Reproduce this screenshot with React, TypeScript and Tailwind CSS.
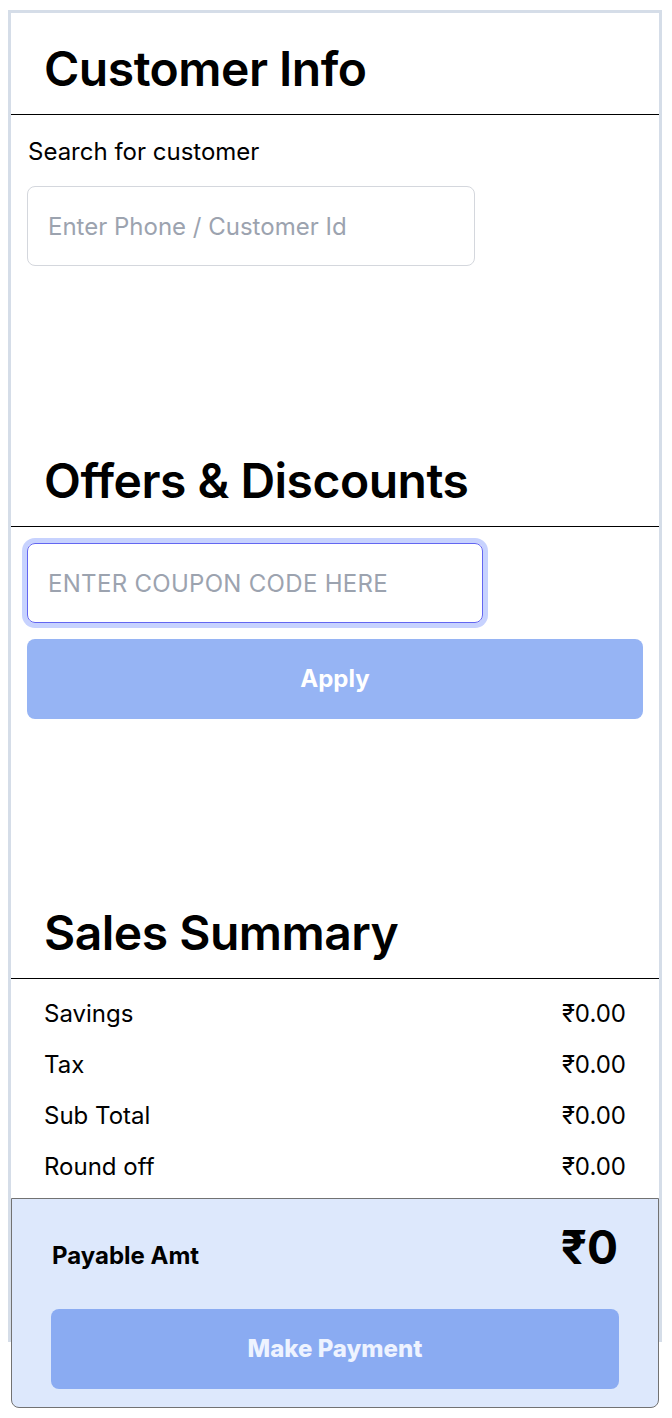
import React from 'react';

const SectionTitle: React.FC<{ title: string }> = ({ title }) => (
    <h2 className="px-[33px] pt-[32px] pb-[21px] text-[48px] leading-[48px] font-semibold tracking-[-0.5px] text-black border-b border-black">
        {title}
    </h2>
);

const SummaryRow: React.FC<{ label: string; value: string }> = ({ label, value }) => (
    <div className="flex justify-between items-center text-[24px] leading-[32px] text-black">
        <span>{label}</span>
        <span>{value}</span>
    </div>
);

const App: React.FC = () => {
    const rows = [
        { label: 'Savings', value: '₹0.00' },
        { label: 'Tax', value: '₹0.00' },
        { label: 'Sub Total', value: '₹0.00' },
        { label: 'Round off', value: '₹0.00' },
    ];

    return (
        <div className="min-h-screen bg-white pt-[10px] pl-[8px] font-['Inter','Liberation_Sans',sans-serif]">
            <div className="w-[654px] h-[1332px] border-[3px] border-[#d5dde8] flex flex-col">
                {/* customer */}
                <section className="h-[412px] shrink-0">
                    <SectionTitle title="Customer Info" />
                    <div className="px-4 pt-[21px]">
                        <p className="text-[24px] leading-[32px] text-black pl-[1px]">Search for customer</p>
                        <input
                            type="text"
                            placeholder="Enter Phone / Customer Id"
                            className="mt-[18px] w-[448px] h-[80px] rounded-lg border border-[#d4d7dd] px-5 text-[24px] text-black placeholder:text-[#9ca3af] outline-none"
                        />
                    </div>
                </section>

                {/* offers */}
                <section className="h-[452px] shrink-0">
                    <SectionTitle title="Offers & Discounts" />
                    <div className="px-4 pt-[16px] flex flex-col gap-4">
                        <input
                            type="text"
                            autoFocus
                            placeholder="ENTER COUPON CODE HERE"
                            className="w-[456px] h-[80px] rounded-lg border border-[#6366f1] ring-[5px] ring-[#c7d2fe] px-5 text-[24px] tracking-[0.3px] text-black placeholder:text-[#9ca3af] outline-none caret-[#374151]"
                        />
                        <button className="w-full h-[80px] rounded-lg bg-[#96b4f4] text-white text-[24px] font-bold">
                            Apply
                        </button>
                    </div>
                </section>

                {/* summary */}
                <section className="flex flex-col shrink-0">
                    <SectionTitle title="Sales Summary" />
                    <div className="px-[33px] pt-[19px] flex flex-col gap-[19px]">
                        {rows.map((r) => (
                            <SummaryRow key={r.label} label={r.label} value={r.value} />
                        ))}
                    </div>
                    <div className="mt-[15px] border border-[#727272] rounded-b-lg bg-[#dde8fc] pt-[24px] pb-[18px] px-[39px]">
                        <div className="flex justify-between items-baseline px-[1px]">
                            <span className="text-[24px] font-bold text-black">Payable Amt</span>
                            <span className="text-[46px] leading-[48px] font-bold text-black">₹0</span>
                        </div>
                        <button className="mt-[35px] w-full h-[80px] rounded-lg bg-[#8aabf2] text-[#eef3ff] text-[24px] font-extrabold">
                            Make Payment
                        </button>
                    </div>
                </section>
            </div>
        </div>
    );
};

export default App;
